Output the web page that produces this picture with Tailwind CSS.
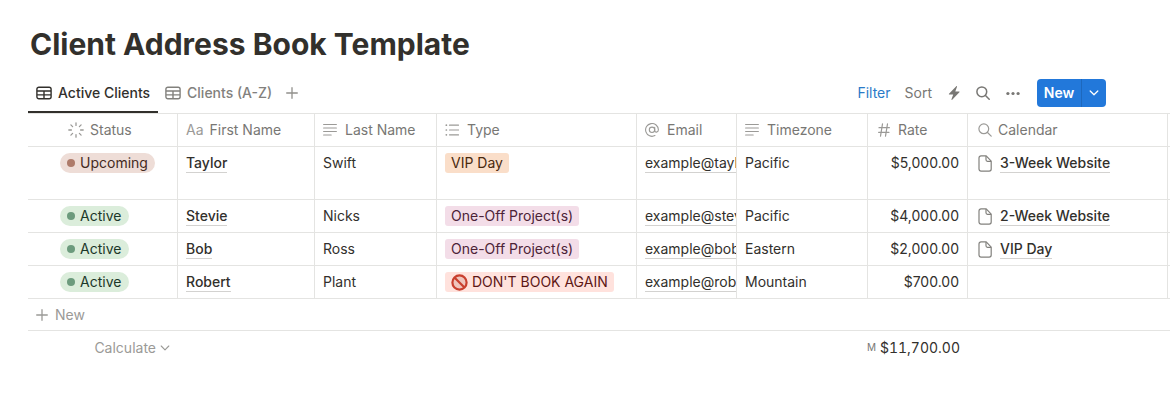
<!DOCTYPE html>
<html lang="en">
<head>
  <meta charset="UTF-8">
  <meta name="viewport" content="width=device-width, initial-scale=1">
  <title>Client Address Book Template</title>
  <script src="https://cdn.jsdelivr.net/npm/@tailwindcss/browser@4"></script>
</head>
<body class="bg-white font-['Inter',sans-serif] text-sm text-[#32302c] overflow-x-hidden">

  <!-- shared icons -->
  <svg class="hidden">
    <symbol id="i-table" viewBox="0 0 16 14" fill="none" stroke="currentColor" stroke-width="1.4">
      <rect x=".9" y="1.2" width="14.2" height="11.6" rx="2" />
      <path d="M1 5h14M1 8.900h14M8 5v7.800" />
    </symbol>
    <symbol id="i-plus" viewBox="0 0 12 12" stroke="currentColor" stroke-width="1.3" stroke-linecap="round">
      <path d="M6 .7v10.600M.7 6h10.600" />
    </symbol>
    <symbol id="i-search" viewBox="0 0 14 14" fill="none" stroke="currentColor" stroke-linecap="round">
      <circle cx="5.800" cy="5.800" r="4.900" />
      <path d="M9.500 9.500l3.700 3.700" />
    </symbol>
    <symbol id="i-text" viewBox="0 0 14 14" stroke="currentColor" stroke-width="1.100" stroke-linecap="round">
      <path d="M.6 1.500h12.800M.6 5h12.800M.6 8.500h12.800M.6 12h7.600" />
    </symbol>
    <symbol id="i-page" viewBox="0 0 14 17" fill="none" stroke="currentColor" stroke-width="1.200" stroke-linejoin="round">
      <path d="M3 .9h5.200l5 5.200v8a2 2 0 0 1-2 2H3a2 2 0 0 1-2-2v-11.200a2 2 0 0 1 2-2z" />
      <path d="M8 1v3.800a1.500 1.500 0 0 0 1.500 1.500H13" />
    </symbol>
    <symbol id="i-chevron" viewBox="0 0 10 6" fill="none" stroke="currentColor" stroke-linecap="round" stroke-linejoin="round">
      <path d="M1.200 1l3.800 3.800L8.800 1" />
    </symbol>
  </svg>

  <main class="pt-[23px] pl-7">
    <h1 class="pl-0.5 text-[30px] leading-[42px] font-bold">Client Address Book Template</h1>

    <div class="mt-2 h-10 pr-16 flex items-center justify-between">
      <nav class="h-full flex items-center" aria-label="Views">
        <a href="#active" class="h-full px-2 pb-0.5 pt-1 flex items-center gap-1.5 border-b-2 border-[#32302c] font-medium" aria-current="page">
          <svg class="w-4 h-3.5"><use href="#i-table" /></svg>Active Clients
        </a>
        <a href="#clients" class="h-full pl-[7px] pr-2 flex items-center gap-1.5 font-medium text-[#82817d]">
          <svg class="w-4 h-3.5"><use href="#i-table" /></svg>Clients (A-Z)
        </a>
        <button class="p-1.5 text-[#91908c]" aria-label="Add view"><svg class="size-3"><use href="#i-plus" /></svg></button>
      </nav>

      <div class="flex items-center text-[#787774]">
        <button class="text-[#2b7bc8]">Filter</button>
        <button class="ml-3.5">Sort</button>
        <button class="ml-4" aria-label="Automations">
          <svg class="w-3 h-4" viewBox="0 0 12 16" fill="currentColor"><path d="M8.300 1.200L1 8.700c-.3.300-.1.700.3.700h3.900l-1.700 4.800c-.2.600.3.900.7.500l7.200-7.500c.3-.3.100-.7-.3-.7H7.300L9 1.700c.2-.6-.3-.9-.7-.5z" /></svg>
        </button>
        <button class="ml-4" aria-label="Search"><svg class="size-3.5" stroke-width="1.500"><use href="#i-search" /></svg></button>
        <button class="ml-4" aria-label="More options">
          <svg class="w-3.5 h-4" viewBox="0 0 14 16" fill="currentColor"><circle cx="1.900" cy="8.500" r="1.600" /><circle cx="7" cy="8.500" r="1.600" /><circle cx="12.100" cy="8.500" r="1.600" /></svg>
        </button>
        <div class="ml-[17px] h-7 flex rounded bg-[#2278da] text-white overflow-hidden">
          <button class="w-[45px] font-semibold border-r border-[#1d68bd]">New</button>
          <button class="w-6 flex items-center justify-center" aria-label="New options"><svg class="w-2.5 h-1.5" stroke-width="1.300"><use href="#i-chevron" /></svg></button>
        </div>
      </div>
    </div>

    <table class="w-full table-fixed border-separate border-spacing-0 border-t border-[#e4e4e2] whitespace-nowrap [&_tbody_td]:align-top [&_tbody_td]:px-2 [&_tbody_td]:py-1.5 [&_tbody_td]:border-b [&_tbody_td]:border-r [&_td]:border-[#e4e4e2] [&_th]:border-[#e4e4e2] [&_th]:border-b [&_th]:border-r [&_th]:px-2 [&_th]:font-normal [&_th]:text-left">
      <colgroup>
        <col class="w-[150px]"><col class="w-[137px]"><col class="w-[122px]"><col class="w-[200px]"><col class="w-[100px]"><col class="w-[131px]"><col class="w-[100px]"><col class="w-[200px]"><col>
      </colgroup>
      <thead class="text-[#787774]">
        <tr class="h-[33px]">
          <th><div class="pl-8 flex items-center gap-1.5">
            <svg class="size-4 text-[#9b9a97]" viewBox="0 0 16 16" stroke="currentColor" stroke-width="1.300" stroke-linecap="round"><path d="M8 .8v2.600M8 12.600v2.600M.8 8h2.600M12.600 8h2.600M2.900 2.900l1.700 1.700M11.400 11.400l1.700 1.700M2.900 13.100l1.700-1.700M11.400 4.600l1.700-1.700" /></svg>Status</div></th>
          <th><div class="flex items-center gap-1.5"><span class="text-[#9b9a97]" aria-hidden="true">Aa</span>First Name</div></th>
          <th><div class="flex items-center gap-2"><svg class="size-3.5 text-[#9b9a97]"><use href="#i-text" /></svg>Last Name</div></th>
          <th><div class="flex items-center gap-2">
            <svg class="size-3.5 text-[#9b9a97]" viewBox="0 0 14 14" stroke="currentColor" stroke-width="1.200" stroke-linecap="round"><path d="M4.500 2.200h9M4.500 7h9M4.500 11.800h9" /><path stroke-width="1.700" d="M1.300 2.200h.1M1.300 7h.1M1.300 11.800h.1" /></svg>Type</div></th>
          <th><div class="flex items-center gap-2">
            <svg class="size-3.5 text-[#9b9a97]" viewBox="0 0 14 14" fill="none" stroke="currentColor" stroke-width="1.100" stroke-linecap="round"><circle cx="7" cy="6.800" r="2.700" /><path d="M9.700 4.200v3.200c0 2.600 3.700 2.200 3.700-.6A6.400 6.400 0 1 0 9.900 12.600" /></svg>Email</div></th>
          <th><div class="flex items-center gap-2"><svg class="size-3.5 text-[#9b9a97]"><use href="#i-text" /></svg>Timezone</div></th>
          <th><div class="pl-0.5 flex items-center gap-2">
            <svg class="w-3 h-3.5 text-[#9b9a97]" viewBox="0 0 12 14" stroke="currentColor" stroke-width="1.200" stroke-linecap="round"><path d="M4.500.8l-2 12.400M9.500.8l-2 12.400M1 4.700h10.400M.6 9.300H11" /></svg>Rate</div></th>
          <th><div class="pl-0.5 flex items-center gap-1.5"><svg class="size-3.5 text-[#9b9a97]" stroke-width="1.200"><use href="#i-search" /></svg>Calendar</div></th>
          <th class="border-r-0!"></th>
        </tr>
      </thead>
      <tbody>
        <tr class="h-[53px]">
          <td><span class="ml-6 h-5 w-fit px-[7px] flex items-center gap-[5px] rounded-full bg-[#eeddd7] text-[#442a1e]"><i class="size-2 rounded-full bg-[#ae7b6a]"></i>Upcoming</span></td>
          <td><a href="#taylor" class="block w-fit h-5 border-b border-[#d3d2d0] font-medium">Taylor</a></td>
          <td>Swift</td>
          <td><span class="h-5 w-fit px-1.5 flex items-center rounded-[3px] bg-[#fadec9] text-[#49290e]">VIP Day</span></td>
          <td class="overflow-hidden pr-0!"><a href="mailto:example@taylorswift.com" class="block w-fit h-5 border-b border-[#d3d2d0]">example@taylorswift.com</a></td>
          <td>Pacific</td>
          <td class="text-right">$5,000.00</td>
          <td><a href="#three-week" class="pl-0.5 flex items-center gap-2"><svg class="w-3.5 h-[17px] text-[#82817d]"><use href="#i-page" /></svg><span class="h-5 border-b border-[#d3d2d0] font-medium">3-Week Website</span></a></td>
          <td class="border-r-0!"></td>
        </tr>
        <tr class="h-[33px]">
          <td><span class="ml-6 h-5 w-fit px-[7px] pr-2 flex items-center gap-[5px] rounded-full bg-[#dbeddb] text-[#1c3829]"><i class="size-2 rounded-full bg-[#6c9b7d]"></i>Active</span></td>
          <td><a href="#stevie" class="block w-fit h-5 border-b border-[#d3d2d0] font-medium">Stevie</a></td>
          <td>Nicks</td>
          <td><span class="h-5 w-fit px-1.5 flex items-center rounded-[3px] bg-[#f3dde8] text-[#4c2337]">One-Off Project(s)</span></td>
          <td class="overflow-hidden pr-0!"><a href="mailto:example@stevienicks.com" class="block w-fit h-5 border-b border-[#d3d2d0]">example@stevienicks.com</a></td>
          <td>Pacific</td>
          <td class="text-right">$4,000.00</td>
          <td><a href="#two-week" class="pl-0.5 flex items-center gap-2"><svg class="w-3.5 h-[17px] text-[#82817d]"><use href="#i-page" /></svg><span class="h-5 border-b border-[#d3d2d0] font-medium">2-Week Website</span></a></td>
          <td class="border-r-0!"></td>
        </tr>
        <tr class="h-[33px]">
          <td><span class="ml-6 h-5 w-fit px-[7px] pr-2 flex items-center gap-[5px] rounded-full bg-[#dbeddb] text-[#1c3829]"><i class="size-2 rounded-full bg-[#6c9b7d]"></i>Active</span></td>
          <td><a href="#bob" class="block w-fit h-5 border-b border-[#d3d2d0] font-medium">Bob</a></td>
          <td>Ross</td>
          <td><span class="h-5 w-fit px-1.5 flex items-center rounded-[3px] bg-[#f3dde8] text-[#4c2337]">One-Off Project(s)</span></td>
          <td class="overflow-hidden pr-0!"><a href="mailto:example@bobross.com" class="block w-fit h-5 border-b border-[#d3d2d0]">example@bobross.com</a></td>
          <td>Eastern</td>
          <td class="text-right">$2,000.00</td>
          <td><a href="#vip-day" class="pl-0.5 flex items-center gap-2"><svg class="w-3.5 h-[17px] text-[#82817d]"><use href="#i-page" /></svg><span class="h-5 border-b border-[#d3d2d0] font-medium">VIP Day</span></a></td>
          <td class="border-r-0!"></td>
        </tr>
        <tr class="h-[33px]">
          <td><span class="ml-6 h-5 w-fit px-[7px] pr-2 flex items-center gap-[5px] rounded-full bg-[#dbeddb] text-[#1c3829]"><i class="size-2 rounded-full bg-[#6c9b7d]"></i>Active</span></td>
          <td><a href="#robert" class="block w-fit h-5 border-b border-[#d3d2d0] font-medium">Robert</a></td>
          <td>Plant</td>
          <td><span class="h-5 w-fit px-1.5 flex items-center gap-1 rounded-[3px] bg-[#ffe2dd] text-[#5d1715]">
            <svg class="size-[17px]" viewBox="0 0 17 17" fill="none" stroke="#c9402f" stroke-width="2.200"><circle cx="8.500" cy="8.500" r="7.100" fill="#efc5bd" /><path d="M3.500 3.500l10 10" /></svg>DON'T BOOK AGAIN</span></td>
          <td class="overflow-hidden pr-0!"><a href="mailto:example@robertplant.com" class="block w-fit h-5 border-b border-[#d3d2d0]">example@robertplant.com</a></td>
          <td>Mountain</td>
          <td class="text-right">$700.00</td>
          <td></td>
          <td class="border-r-0!"></td>
        </tr>
      </tbody>
      <tfoot>
        <tr class="h-8 text-[#9b9a97]">
          <td colspan="9" class="px-2 border-b"><button class="flex items-center gap-[7px]"><svg class="size-3"><use href="#i-plus" /></svg>New</button></td>
        </tr>
        <tr class="h-[33px]">
          <td class="px-2 text-[#9b9a97]"><button class="ml-auto flex items-center gap-1"><span>Calculate</span><svg class="w-2.5 h-1.5" stroke-width="1.100"><use href="#i-chevron" /></svg></button></td>
          <td colspan="5"></td>
          <td class="pr-2"><div class="flex items-center justify-end gap-1 tabular-nums"><span class="text-[10px] text-[#787774]">M</span>$11,700.00</div></td>
          <td colspan="2"></td>
        </tr>
      </tfoot>
    </table>
  </main>
</body>
</html>
